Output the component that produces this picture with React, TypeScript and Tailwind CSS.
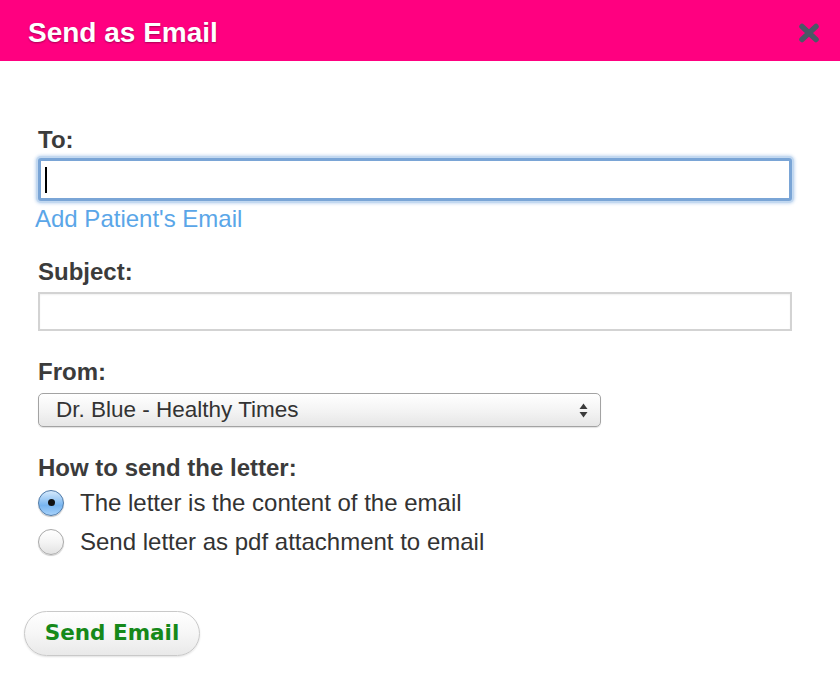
const CloseIcon = () => (
  <svg width="22" height="20" viewBox="0 0 22 20" aria-hidden="true">
    <path d="M4 3.5 L18 16.5 M18 3.5 L4 16.5" stroke="#4a5866" strokeWidth="5.5" strokeLinecap="round" fill="none" />
  </svg>
);

const SelectArrows = () => (
  <svg width="9" height="15" viewBox="0 0 9 15" aria-hidden="true">
    <path d="M4.5 0.5 L8.5 6 L0.5 6 Z" fill="#3a3a3a" />
    <path d="M0.5 9 L8.5 9 L4.5 14.5 Z" fill="#3a3a3a" />
  </svg>
);

const Label = ({ children, className = "" }: { children: React.ReactNode; className?: string }) => (
  <div className={`text-[24px] leading-[28px] font-bold text-[#3b3b3b] ${className}`}>{children}</div>
);

const Radio = ({ checked }: { checked: boolean }) =>
  checked ? (
    <span className="flex h-[26px] w-[26px] shrink-0 items-center justify-center rounded-full border border-[#4f7aa8] bg-[linear-gradient(to_bottom,#d6eafc,#78b5f0_60%,#a6d1fa)] shadow-[0_1px_1px_rgba(0,0,0,0.25)]">
      <span className="h-[7px] w-[7px] rounded-full bg-[#111]" />
    </span>
  ) : (
    <span className="h-[26px] w-[26px] shrink-0 rounded-full border border-[#a9a9a9] bg-[linear-gradient(to_bottom,#ffffff,#f4f4f4_50%,#e2e2e2)] shadow-[0_1px_1px_rgba(0,0,0,0.2)]" />
  );

const options = [
  { text: "The letter is the content of the email", checked: true },
  { text: "Send letter as pdf attachment to email", checked: false },
];

export default function App() {
  return (
    <div className="h-[700px] w-[840px] bg-white font-['Liberation_Sans',Arial,sans-serif]">
      {/* Header */}
      <div className="flex h-[61px] items-start justify-between bg-[#ff0080] pl-[28px] pr-[20px] pt-[17px]">
        <h1 className="text-[28px] leading-[32px] font-bold text-white [text-shadow:0_1px_2px_rgba(0,0,0,0.35)]">
          Send as Email
        </h1>
        <div className="pt-[6px]">
          <CloseIcon />
        </div>
      </div>

      {/* Form */}
      <div className="pl-[38px] pr-[48px] pt-[65px]">
        <Label>To:</Label>
        <div className="mt-[4px] flex h-[43px] w-full items-center rounded-[3px] border-[3px] border-[#7aa5d6] bg-white pl-[4px] shadow-[0_0_0_2px_#c2d8f0,0_0_3px_3px_rgba(170,200,235,0.6)]">
          <span className="h-[26px] w-[2px] bg-black" />
        </div>
        <div className="-ml-[3px] mt-[4px] text-[24px] leading-[28px] text-[#5aa6e8]">Add Patient's Email</div>

        <Label className="mt-[25px]">Subject:</Label>
        <div className="mt-[6px] h-[39px] w-full border-2 border-[#d3d3d3] bg-white shadow-[inset_0_1px_2px_rgba(0,0,0,0.06)]" />

        <Label className="mt-[27px]">From:</Label>
        <div className="mt-[7px] flex h-[34px] w-[563px] items-center justify-between rounded-[5px] border border-[#a3a3a3] bg-[linear-gradient(to_bottom,#ffffff,#f3f3f3_55%,#e6e6e6)] pl-[17px] pr-[12px] shadow-[0_1px_1px_rgba(0,0,0,0.12)]">
          <span className="text-[22.5px] leading-[26px] text-[#333]">Dr. Blue - Healthy Times</span>
          <SelectArrows />
        </div>

        <Label className="mt-[27px]">How to send the letter:</Label>
        <div className="mt-[1px] flex flex-col">
          {options.map((o) => (
            <div key={o.text} className="flex h-[39px] items-center gap-[16px]">
              <Radio checked={o.checked} />
              <span className="text-[24px] leading-[28px] text-[#333]">{o.text}</span>
            </div>
          ))}
        </div>
      </div>

      {/* Footer */}
      <div className="pl-[24px] pt-[50px]">
        <button className="flex h-[45px] w-[176px] items-center justify-center rounded-full border border-[#c9c9c9] bg-[linear-gradient(to_bottom,#ffffff,#f6f6f6_50%,#e9e9e9)] shadow-[0_1px_2px_rgba(0,0,0,0.12)] font-['DejaVu_Sans',sans-serif] text-[21.5px] font-bold text-[#16891a]">
          Send Email
        </button>
      </div>
    </div>
  );
}
